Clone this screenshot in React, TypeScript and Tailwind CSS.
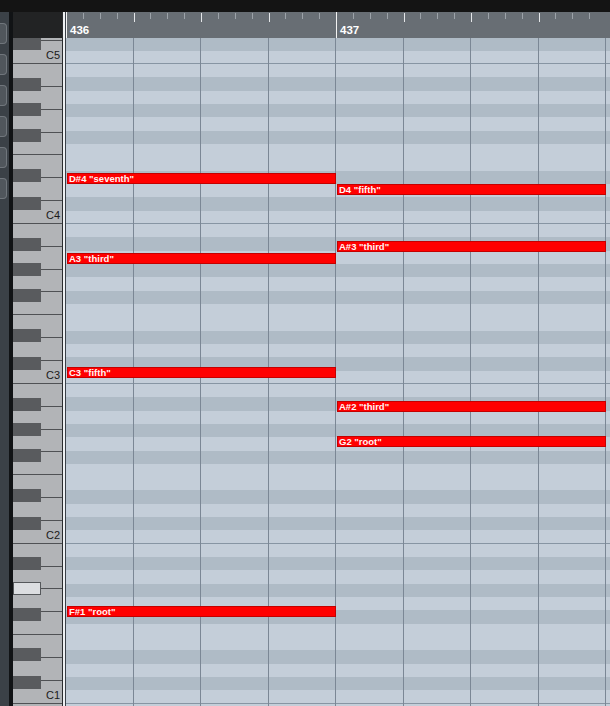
import React from "react";

type Note = { label: string; x: number; y: number };

// note bars, placed on the roll canvas (px relative to grid origin)
const notes: Note[] = [
  { label: 'D#4 "seventh"', x: 1, y: 135 },
  { label: 'D4 "fifth"', x: 271, y: 146 },
  { label: 'A#3 "third"', x: 271, y: 203 },
  { label: 'A3 "third"', x: 1, y: 215 },
  { label: 'C3 "fifth"', x: 1, y: 329 },
  { label: 'A#2 "third"', x: 271, y: 363 },
  { label: 'G2 "root"', x: 271, y: 398 },
  { label: 'F#1 "root"', x: 1, y: 568 },
];

// semitone index from C5 downwards: 0 = C5, 1 = B4 ...
const BLACK = [2, 4, 6, 9, 11];
const lanes = Array.from({ length: 54 }, (_, i) => i - 2);

const whiteNames = ["D", "C", "B", "A", "G", "F", "E"];
// white keys from D5 downwards
const whiteKeys = Array.from({ length: 31 }, (_, i) => {
  const name = whiteNames[i % 7];
  const octave = 5 - Math.floor((i + 5) / 7);
  return { name, octave };
});

// black keys: offsets (top) from each octave's C/B line
const blackOffsets = [
  { off: -27, pc: "C#" },
  { off: -55, pc: "D#" },
  { off: -95, pc: "F#" },
  { off: -121, pc: "G#" },
  { off: -146, pc: "A#" },
];
const octaveLines = [64, 224, 384, 544, 703];

function Ruler({ bar }: { bar: number }) {
  return (
    <div className="relative h-full w-[270px] shrink-0">
      <div className="grid h-full grid-cols-16">
        {Array.from({ length: 16 }, (_, i) => (
          <div key={i} className="relative">
            {i === 0 ? (
              <div className="absolute left-0 top-0 h-full w-px bg-[#f2f2f2]" />
            ) : i % 4 === 0 ? (
              <div className="absolute left-0 top-[1px] h-[9px] w-px bg-[#e4e6e8]" />
            ) : (
              <div className="absolute left-0 top-[1px] h-[6px] w-px bg-[#9ca2a8]" />
            )}
          </div>
        ))}
      </div>
      <span className="absolute left-[4px] top-[12px] text-[11.5px] font-bold leading-[13px] text-white">
        {bar}
      </span>
    </div>
  );
}

export default function App() {
  return (
    <div className="flex h-[706px] w-[610px] flex-col overflow-hidden bg-[#141414] font-['Liberation_Sans',Arial,sans-serif]">
      <div className="h-[12px] shrink-0 bg-[#141414]" />
      <div className="flex min-h-0 flex-1">
        {/* left tool strip */}
        <div className="flex w-[9px] shrink-0 flex-col gap-[10px] bg-[#3b4147] pt-[11px]">
          {Array.from({ length: 6 }, (_, i) => (
            <div
              key={i}
              className="h-[21px] w-[7px] rounded-r-[4px] border border-l-0 border-[#70767c] bg-[#50565c]"
            />
          ))}
        </div>
        <div className="w-[4px] shrink-0 bg-[#111315]" />

        {/* keyboard */}
        <div className="flex w-[49px] shrink-0 flex-col">
          <div className="h-[26px] shrink-0 bg-[#222324]" />
          <div className="relative min-h-0 flex-1 overflow-hidden bg-[#b2b4b7]">
            <div className="mt-[-19.7px] flex flex-col">
              {whiteKeys.map((k, i) => (
                <div
                  key={i}
                  className="relative h-[22.857px] shrink-0 border-b border-[#4f5154]"
                >
                  {k.name === "C" && (
                    <span className="absolute bottom-[1px] right-[2px] text-[11px] leading-[13px] text-[#1a1a1a]">
                      C{k.octave}
                    </span>
                  )}
                </div>
              ))}
            </div>
            {octaveLines.map((line) =>
              blackOffsets.map((b) => {
                const top = line + b.off - 38;
                const hot = line === 703 && b.pc === "G#";
                return (
                  <div
                    key={`${line}-${b.pc}`}
                    className={
                      hot
                        ? "absolute left-0 h-[13px] w-[28px] border border-[#55585b] bg-[#dcdee1]"
                        : "absolute left-0 h-[13px] w-[28px] bg-[#595b5e]"
                    }
                    style={{ top }}
                  />
                );
              })
            )}
          </div>
        </div>

        {/* start marker */}
        <div className="flex w-[4px] shrink-0">
          <div className="w-px bg-[#2a2c2e]" />
          <div className="w-[2px] bg-[#eef0f2]" />
          <div className="w-px bg-[#3a4048]" />
        </div>

        {/* roll */}
        <div className="flex min-w-0 flex-1 flex-col">
          <div className="flex h-[26px] shrink-0 overflow-hidden bg-[#686e74]">
            <Ruler bar={436} />
            <Ruler bar={437} />
          </div>
          <div className="relative min-h-0 flex-1 overflow-hidden bg-[#c4ced9]">
            <div className="mt-[-14px] flex flex-col">
              {lanes.map((k) => {
                const m = ((k % 12) + 12) % 12;
                let cls = "h-[13.333px] shrink-0 bg-[#c4ced9]";
                if (BLACK.includes(m)) cls = "h-[13.333px] shrink-0 bg-[#afbbc6]";
                if (m === 0) cls = "h-[13.333px] shrink-0 border-b border-[#8795a3] bg-[#c4ced9]";
                return <div key={k} className={cls} />;
              })}
            </div>
            <div className="absolute inset-0 flex">
              {Array.from({ length: 9 }, (_, i) => (
                <div
                  key={i}
                  className="h-full w-[67.5px] shrink-0 border-r border-[#7b8795]"
                />
              ))}
            </div>
            {notes.map((n) => (
              <div
                key={n.label}
                className="absolute flex h-[11px] w-[269px] items-center border border-[#c40000] bg-[#ff0000] pl-[1px]"
                style={{ left: n.x, top: n.y }}
              >
                <span className="whitespace-pre text-[9.5px] font-bold leading-[10px] text-[#fff4f4]">
                  {n.label}
                </span>
              </div>
            ))}
          </div>
        </div>
      </div>
    </div>
  );
}
